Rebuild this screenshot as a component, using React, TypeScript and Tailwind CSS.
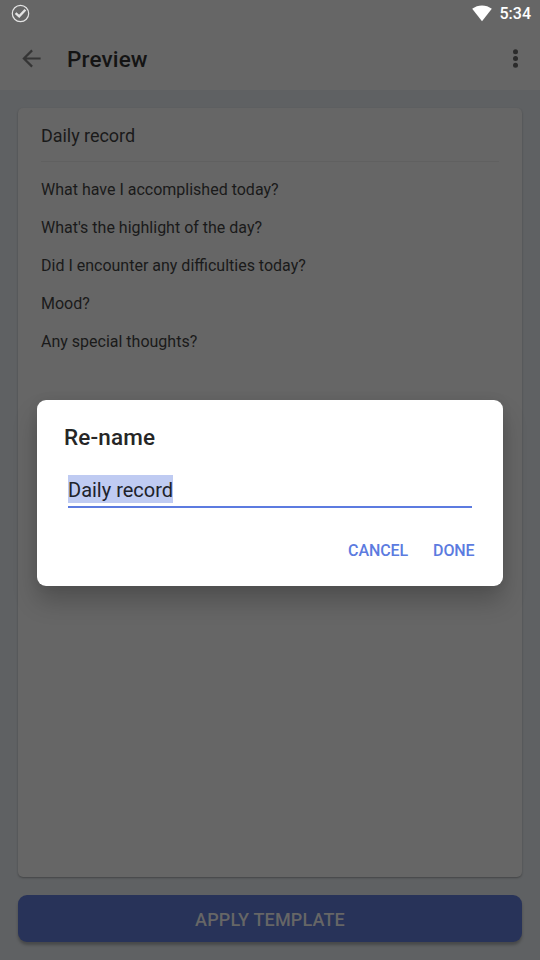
const questions = [
  "What have I accomplished today?",
  "What's the highlight of the day?",
  "Did I encounter any difficulties today?",
  "Mood?",
  "Any special thoughts?",
];

function StatusBar() {
  return (
    <div className="flex h-[27px] items-center pl-[11px] pr-[9px]">
      <svg width="19" height="19" viewBox="0 0 19 19" fill="none">
        <circle cx="9.5" cy="9.5" r="8.2" stroke="#e4e4e4" strokeWidth="1.2" />
        <path d="M4.6 9.2 8.2 12.4 14.4 5.7" stroke="#e4e4e4" strokeWidth="2.4" />
      </svg>
      <svg className="ml-auto" width="20" height="17" viewBox="0 0 20 17">
        <path d="M.2 3.8C5.8-.7 14.2-.7 19.8 3.8L10 16.2Z" fill="#fff" />
      </svg>
      <span className="ml-[8px] text-[16px] font-medium leading-[27px] text-white">5:34</span>
    </div>
  );
}

function Toolbar() {
  return (
    <div className="flex h-[63px] items-center pl-[22px] pr-[21px]">
      <svg width="20" height="21" viewBox="0 0 20 21" fill="none" stroke="#353535" strokeWidth="2.2">
        <path d="M18.6 10.5H2.2M10.1 2.4 1.9 10.5l8.2 8.1" />
      </svg>
      <h1 className="ml-[25px] text-[22.5px] font-medium leading-[30px] tracking-[0.15px] text-[#141414]">Preview</h1>
      <svg className="ml-auto" width="7" height="21" viewBox="0 0 7 21" fill="#2b2b2b">
        <circle cx="3.5" cy="3.7" r="2.5" />
        <circle cx="3.5" cy="10.5" r="2.5" />
        <circle cx="3.5" cy="17.3" r="2.5" />
      </svg>
    </div>
  );
}

function RenameDialog() {
  return (
    <div className="absolute left-[37px] top-[400px] flex h-[186px] w-[466px] flex-col rounded-[9px] bg-white shadow-[0_15px_24px_rgba(0,0,0,0.22),0_0_12px_rgba(0,0,0,0.06)]">
      <h2 className="ml-[27px] mt-[22px] text-[22.5px] font-medium leading-[30px] tracking-[0.15px] text-[#262626]">Re-name</h2>
      <div className="ml-[31px] mr-[31px] mt-[23px] flex h-[33px] items-start border-b-2 border-[#5c7be0]">
        <span className="h-[28px] bg-[#bfcbf2] text-[20px] leading-[30px] text-[#20222a]">Daily record</span>
      </div>
      <div className="mr-[28.5px] mt-[31px] flex justify-end gap-[25px] text-[16px] font-medium leading-[24px] tracking-[-0.1px] text-[#5c7be0]">
        <button>CANCEL</button>
        <button>DONE</button>
      </div>
    </div>
  );
}

export default function App() {
  return (
    <div className="relative flex h-[960px] w-[540px] flex-col overflow-hidden bg-[#5f6163] font-['Roboto',sans-serif]">
      <header className="bg-[#666666]">
        <StatusBar />
        <Toolbar />
      </header>
      <main className="flex flex-1 flex-col px-[18px] pb-[18px] pt-[18px]">
        <section className="h-[769px] rounded-[5px] bg-[#666666] px-[23px] text-[#1a1a1a] shadow-[0_1px_2px_rgba(0,0,0,0.3)]">
          <div className="h-[54px] border-b border-[#606060] text-[18px] leading-[56px] tracking-[-0.05px]">Daily record</div>
          <ul className="pt-[9px] text-[16px] leading-[38px]">
            {questions.map((question) => (
              <li key={question}>{question}</li>
            ))}
          </ul>
        </section>
        <button className="mt-[18px] h-[47px] rounded-[9px] bg-[#283359] pt-[2px] text-[18px] font-medium tracking-[0.15px] text-[#666666] shadow-[0_3px_3px_rgba(0,0,0,0.25)]">
          APPLY TEMPLATE
        </button>
      </main>
      <RenameDialog />
    </div>
  );
}
